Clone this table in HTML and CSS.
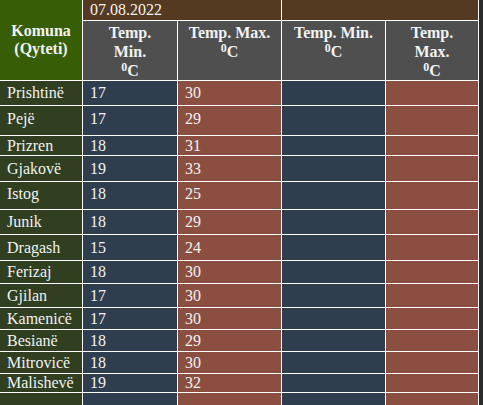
FILE: index.html
```html
<!DOCTYPE html>
<html>
<head>
<meta charset="utf-8">
<link rel="stylesheet" href="styles.css">
</head>
<body>
<table class="temps">
  <colgroup>
    <col class="c-city">
    <col class="c-min">
    <col class="c-max">
    <col class="c-min2">
    <col class="c-max2">
  </colgroup>
  <thead>
    <tr class="r-date">
      <th rowspan="2" class="city-head">Komuna<br>(Qyteti)</th>
      <td colspan="2" class="date">07.08.2022</td>
      <td colspan="2" class="date"></td>
    </tr>
    <tr class="r-head">
      <th class="head">Temp.<br>Min.<br><sup>0</sup>C</th>
      <th class="head">Temp. Max.<br><sup>0</sup>C</th>
      <th class="head">Temp. Min.<br><sup>0</sup>C</th>
      <th class="head">Temp.<br>Max.<br><sup>0</sup>C</th>
    </tr>
  </thead>
  <tbody>
    <tr class="h24"><td class="city">Prishtinë</td><td class="min">17</td><td class="max">30</td><td class="min"></td><td class="max"></td></tr>
    <tr class="h29 up4"><td class="city">Pejë</td><td class="min">17</td><td class="max">29</td><td class="min"></td><td class="max"></td></tr>
    <tr class="h19"><td class="city">Prizren</td><td class="min">18</td><td class="max">31</td><td class="min"></td><td class="max"></td></tr>
    <tr class="h25"><td class="city">Gjakovë</td><td class="min">19</td><td class="max">33</td><td class="min"></td><td class="max"></td></tr>
    <tr class="h27 up4"><td class="city">Istog</td><td class="min">18</td><td class="max">25</td><td class="min"></td><td class="max"></td></tr>
    <tr class="h24"><td class="city">Junik</td><td class="min">18</td><td class="max">29</td><td class="min"></td><td class="max"></td></tr>
    <tr class="h25"><td class="city">Dragash</td><td class="min">15</td><td class="max">24</td><td class="min"></td><td class="max"></td></tr>
    <tr class="h22"><td class="city">Ferizaj</td><td class="min">18</td><td class="max">30</td><td class="min"></td><td class="max"></td></tr>
    <tr class="h23"><td class="city">Gjilan</td><td class="min">17</td><td class="max">30</td><td class="min"></td><td class="max"></td></tr>
    <tr class="h21"><td class="city">Kamenicë</td><td class="min">17</td><td class="max">30</td><td class="min"></td><td class="max"></td></tr>
    <tr class="h21"><td class="city">Besianë</td><td class="min">18</td><td class="max">29</td><td class="min"></td><td class="max"></td></tr>
    <tr class="h21"><td class="city">Mitrovicë</td><td class="min">18</td><td class="max">30</td><td class="min"></td><td class="max"></td></tr>
    <tr class="h18"><td class="city">Malishevë</td><td class="min">19</td><td class="max">32</td><td class="min"></td><td class="max"></td></tr>
    <tr class="h24"><td class="city"></td><td class="min"></td><td class="max"></td><td class="min"></td><td class="max"></td></tr>
  </tbody>
</table>
</body>
</html>
```
FILE: styles.css
```css
html, body {
  margin: 0;
  padding: 0;
  background: #2b2b2b;
}
body {
  font-family: "Liberation Serif", "Times New Roman", serif;
  font-size: 16px;
  color: #f2f2f2;
  overflow: hidden;
}
.temps {
  border-collapse: separate;
  border-spacing: 0;
  table-layout: fixed;
  width: 479px;
}
.c-city { width: 83px; }
.c-min { width: 95px; }
.c-max { width: 104px; }
.c-min2 { width: 104px; }
.c-max2 { width: 93px; }

.temps th, .temps td {
  border-right: 1px solid #ffffff;
  border-bottom: 1px solid #ffffff;
  padding: 0 7px;
  box-sizing: content-box;
  line-height: 18px;
  overflow: hidden;
}
.city-head {
  background: #375d06;
  text-align: center;
  vertical-align: middle;
  padding: 0 4px;
  line-height: 20px;
}
.date {
  background: #553a22;
  height: 20px;
  vertical-align: middle;
  text-align: left;
  padding-top: 1px;
}
.temps .head {
  background: #4f4f4f;
  vertical-align: top;
  text-align: center;
  padding: 2px 8px 0;
  height: 53px;
  line-height: 19px;
}
.head sup {
  font-size: 12px;
  line-height: 0;
  vertical-align: 5px;
}
.city { background: #2f3f20; padding-left: 6px; }
.min { background: #2f3e4e; }
.max { background: #8b4f42; }
.temps tbody td { vertical-align: middle; }

.h18 td { height: 18px; }
.h19 td { height: 19px; }
.h21 td { height: 21px; }
.h22 td { height: 22px; }
.h23 td { height: 23px; }
.h24 td { height: 24px; }
.h25 td { height: 25px; }
.h27 td { height: 27px; }
.h29 td { height: 29px; }
.up4 td { padding-bottom: 4px; }
.up4.h29 td { height: 25px; }
.up4.h27 td { height: 23px; }
```
